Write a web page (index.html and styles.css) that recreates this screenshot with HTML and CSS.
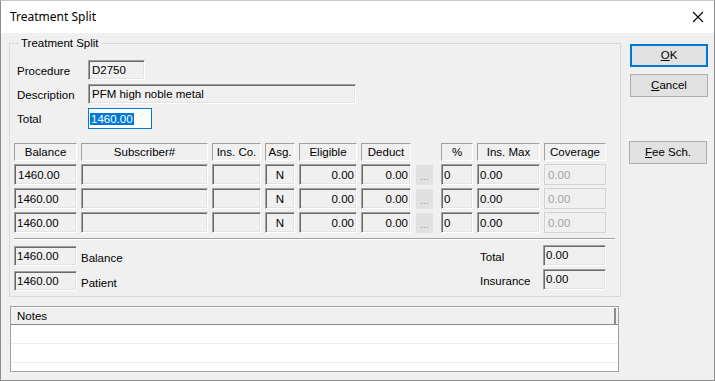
FILE: index.html
```html
<!DOCTYPE html>
<html>
<head lang="en">
    <meta charset="utf-8">
    <title>Treatment Split</title>
    <link rel="stylesheet" href="styles.css">
</head>
<body>
<div class="window">
    <div class="titlebar">
        <span class="title">Treatment Split</span>
        <svg class="close" width="12" height="12" viewBox="0 0 12 12">
            <path d="M1 1L11 11M11 1L1 11" stroke="#000" stroke-width="1.1" fill="none"/>
        </svg>
    </div>
    <div class="body">
        <div class="main">
            <fieldset class="group">
                <legend>Treatment Split</legend>
                <div class="info">
                    <span class="label">Procedure</span>
                    <div class="field w-proc">D2750</div>
                    <span class="label">Description</span>
                    <div class="field w-desc">PFM high noble metal</div>
                    <span class="label">Total</span>
                    <div class="field edit w-total"><span class="sel">1460.00</span></div>
                </div>

                <div class="split">
                    <div class="head">Balance</div>
                    <div class="head">Subscriber#</div>
                    <div class="head">Ins. Co.</div>
                    <div class="head">Asg.</div>
                    <div class="head">Eligible</div>
                    <div class="head">Deduct</div>
                    <div></div>
                    <div class="head">%</div>
                    <div class="head">Ins. Max</div>
                    <div class="head">Coverage</div>

                    <div class="field">1460.00</div>
                    <div class="field"></div>
                    <div class="field"></div>
                    <div class="field center">N</div>
                    <div class="field right">0.00</div>
                    <div class="field right">0.00</div>
                    <div class="dots">...</div>
                    <div class="field tight">0</div>
                    <div class="field tight">0.00</div>
                    <div class="field off">0.00</div>

                    <div class="field tight">1460.00</div>
                    <div class="field"></div>
                    <div class="field"></div>
                    <div class="field center">N</div>
                    <div class="field right">0.00</div>
                    <div class="field right">0.00</div>
                    <div class="dots">...</div>
                    <div class="field tight">0</div>
                    <div class="field tight">0.00</div>
                    <div class="field off">0.00</div>

                    <div class="field tight">1460.00</div>
                    <div class="field"></div>
                    <div class="field"></div>
                    <div class="field center">N</div>
                    <div class="field right">0.00</div>
                    <div class="field right">0.00</div>
                    <div class="dots">...</div>
                    <div class="field tight">0</div>
                    <div class="field tight">0.00</div>
                    <div class="field off">0.00</div>
                </div>

                <div class="sep"></div>

                <div class="summary">
                    <div class="sum-left">
                        <div class="field tight">1460.00</div>
                        <span class="sum-label">Balance</span>
                        <div class="field tight">1460.00</div>
                        <span class="sum-label">Patient</span>
                    </div>
                    <div class="sum-right">
                        <span class="sum-label">Total</span>
                        <div class="field tight">0.00</div>
                        <span class="sum-label">Insurance</span>
                        <div class="field tight">0.00</div>
                    </div>
                </div>
            </fieldset>

            <div class="notes">
                <div class="notes-head">
                    <div class="notes-col">Notes</div>
                </div>
                <div class="notes-row"></div>
                <div class="notes-row"></div>
                <div class="notes-row"></div>
            </div>
        </div>

        <div class="side">
            <div class="btn default"><u>O</u>K</div>
            <div class="btn"><u>C</u>ancel</div>
            <div class="btn fee"><u>F</u>ee Sch.</div>
        </div>
    </div>
</div>
</body>
</html>
```

FILE: styles.css
```css
html, body {
    margin: 0;
    padding: 0;
    background: #f0f0f0;
}

.window {
    width: 715px;
    height: 381px;
    box-sizing: border-box;
    border: 1px solid #8c8c8c;
    border-top-color: #c8c8c8;
    background: #f0f0f0;
    font-family: "Liberation Sans", Arial, sans-serif;
    font-size: 11.5px;
    color: #000;
    display: flex;
    flex-direction: column;
}

.titlebar {
    height: 32px;
    box-sizing: border-box;
    flex: none;
    background: #fff;
    display: flex;
    align-items: center;
    justify-content: space-between;
    padding: 0 10px 2px 9px;
}

.title {
    font-family: "Noto Sans", "Open Sans", sans-serif;
    font-size: 12px;
}

.close {
    margin-top: 1px;
}

.body {
    display: flex;
    padding-left: 8px;
}

.main {
    width: 612px;
}

.group {
    margin: 3px 0 0;
    padding: 10px 5px 5px 4px;
    border: 1px solid #d9d9d9;
    min-width: 0;
}

.group legend {
    padding: 0 2px;
    margin-left: 5px;
    line-height: 14px;
}

.info {
    display: grid;
    grid-template-columns: 74px auto;
    grid-auto-rows: 20px;
    row-gap: 4px;
    align-items: center;
}

.label {
    padding-left: 3px;
    padding-top: 2px;
}

.field {
    box-sizing: border-box;
    height: 20px;
    border: 1px solid;
    border-color: #a0a0a0 #fff #fff #a0a0a0;
    box-shadow: inset 1px 1px #696969, inset -1px -1px #e3e3e3;
    padding: 1px 3px 0;
    line-height: 16px;
    background: #f0f0f0;
    white-space: nowrap;
    overflow: hidden;
}

.field.tight {
    padding-left: 2px;
}

.field.right {
    text-align: right;
    padding-right: 2px;
}

.field.center {
    text-align: center;
}

.field.off {
    border-color: #d4d4d4;
    box-shadow: none;
    color: #a3a3a3;
    padding-top: 2px;
}

.w-proc {
    width: 57px;
}

.w-desc {
    width: 268px;
}

.w-total {
    width: 64px;
}

.field.edit {
    height: 21px;
    background: #fff;
    border: 1px solid #0078d7;
    box-shadow: none;
    padding: 2px 1px 0;
}

.sel {
    background: #0078d7;
    color: #fff;
    padding: 0 1px;
}

.split {
    margin-top: 15px;
    display: grid;
    grid-template-columns: 63px 127px 49px 30px 58px 50px 22px 32px 63px 62px;
    grid-template-rows: 18px 21px 21px 21px;
    column-gap: 4px;
    row-gap: 3px;
}

.split .field {
    height: 21px;
    padding-top: 2px;
}

.head {
    box-sizing: border-box;
    border: 1px solid;
    border-color: #a0a0a0 #fff #fff #a0a0a0;
    text-align: center;
    line-height: 16px;
    white-space: nowrap;
}

.dots {
    box-sizing: border-box;
    width: 17px;
    height: 20px;
    margin: 1px 0 0 1px;
    background: #e0e0e0;
    color: #9c9c9c;
    text-align: center;
    line-height: 24px;
    font-size: 10px;
}

.sep {
    margin-top: 5px;
    border-top: 1px solid #a0a0a0;
    border-bottom: 1px solid #fff;
}

.summary {
    width: 592px;
    margin-top: 6px;
    display: flex;
    justify-content: space-between;
}

.sum-left {
    display: grid;
    grid-template-columns: 63px auto;
    grid-auto-rows: 20px;
    column-gap: 4px;
    row-gap: 5px;
}

.sum-right {
    margin-top: -1px;
    display: grid;
    grid-template-columns: 63px 63px;
    grid-auto-rows: 21px;
    row-gap: 3px;
}

.sum-right .field {
    height: 21px;
}

.sum-label {
    padding-top: 6px;
}

.notes {
    margin: 9px 0 0 1px;
    width: 609px;
    height: 66px;
    box-sizing: border-box;
    border: 1px solid #a0a0a0;
    background: #fff;
    overflow: hidden;
}

.notes-head {
    height: 18px;
    box-sizing: border-box;
    background: #f0f0f0;
    border-top: 1px solid #fff;
    border-bottom: 1px solid #8a8a8a;
    padding-right: 2px;
}

.notes-col {
    height: 100%;
    box-sizing: border-box;
    border-right: 2px solid #8a8a8a;
    padding-left: 6px;
    line-height: 16px;
}

.notes-row {
    height: 18px;
    border-bottom: 1px solid #ececec;
}

.side {
    margin-left: 8px;
    width: 79px;
    padding-top: 11px;
    display: flex;
    flex-direction: column;
    align-items: flex-start;
}

.btn {
    box-sizing: border-box;
    width: 78px;
    height: 23px;
    border: 1px solid #adadad;
    background: #e1e1e1;
    text-align: center;
    line-height: 21px;
    margin-left: 1px;
    margin-bottom: 7px;
    cursor: default;
}

.btn.default {
    border-color: #0078d7;
    box-shadow: inset 0 0 0 1px #0078d7;
}

.btn.fee {
    margin-left: 0;
    margin-top: 37px;
}
```
